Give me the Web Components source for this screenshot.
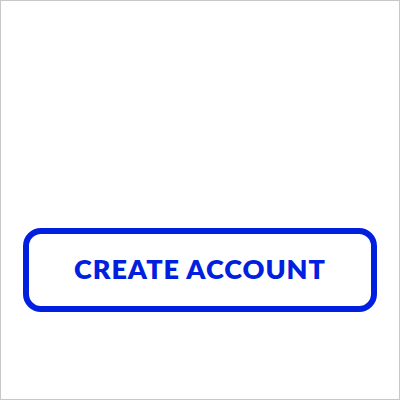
<!DOCTYPE html>
<html lang="en">
<head>
  <meta charset="utf-8">
  <meta name="viewport" content="width=device-width, initial-scale=1">
  <title>Create account</title>
  <style>
    body {
      margin: 0;
      background: #fff;
    }
  </style>
</head>
<body>
  <signup-panel>
    <outline-button>CREATE ACCOUNT</outline-button>
  </signup-panel>

  <script>
    /**
     * Signup Panel.
     *
     * A framed panel which keeps its actions near the bottom.
     */
    class SignupPanel extends HTMLElement {

      constructor() {
        super();
        this.attachShadow({ mode: 'open' });
        const template = document.createElement('template');

        template.innerHTML = `
          <style>
            :host {
              display: flex;
              flex-direction: column;
              justify-content: flex-end;
              box-sizing: border-box;
              min-height: 100vh;
              padding: 22px 22px 87px;
              border: 1px solid #c8c8c8;
              background: #fff;
            }
          </style>

          <slot></slot>
        `;

        this.shadowRoot.appendChild(template.content.cloneNode(true));
      }
    }

    /**
     * Outline Button.
     *
     * A full width button with a thick rounded outline.
     */
    class OutlineButton extends HTMLElement {

      constructor() {
        super();
        this.attachShadow({ mode: 'open' });
        const template = document.createElement('template');

        template.innerHTML = `
          <style>
            :host {
              display: block;
            }

            button {
              display: block;
              box-sizing: border-box;
              width: 100%;
              margin: 0;
              padding: 19px 16px 21px;
              border: 6px solid #001fdf;
              border-radius: 18px;
              background: #fff;
              color: #001fdf;
              font-family: Lato, "Open Sans", sans-serif;
              font-size: 27px;
              font-weight: 800;
              line-height: 32px;
              letter-spacing: 1px;
              white-space: nowrap;
              cursor: pointer;
            }
          </style>

          <button type="button"><slot></slot></button>
        `;

        this.shadowRoot.appendChild(template.content.cloneNode(true));
      }
    }

    // Register custom elements
    customElements.define('signup-panel', SignupPanel);
    customElements.define('outline-button', OutlineButton);
  </script>
</body>
</html>
